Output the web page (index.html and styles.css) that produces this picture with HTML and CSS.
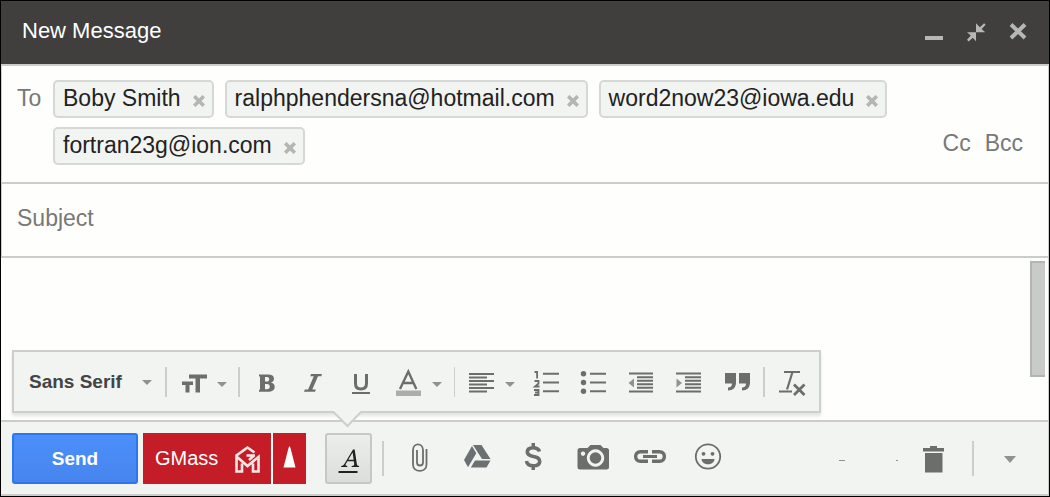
FILE: index.html
```html
<!DOCTYPE html>
<html lang="en">
<head>
<meta charset="utf-8">
<title>New Message</title>
<link rel="stylesheet" href="styles.css">
</head>
<body>
<main class="compose">
  <header class="titlebar">
    <h1 class="title">New Message</h1>
    <div class="window-controls">
      <button type="button" class="window-button" aria-label="Minimize"><svg width="42" height="42" viewBox="913 10 42 42"><rect x="925" y="36" width="18" height="4"/></svg></button>
      <button type="button" class="window-button" aria-label="Exit full screen"><svg width="42" height="42" viewBox="955 10 42 42"><path d="M976 23.2v9h9.2l-3.6-3.2 4-4.2-1.5-1.6-4.2 4zM976 32.2v9l-3.2-3.5-4.2 3.7-1.6-1.6 3.8-4.2-3.8-3.4z"/></svg></button>
      <button type="button" class="window-button" aria-label="Close"><svg width="42" height="42" viewBox="997 10 42 42"><path class="stroke" stroke-width="4" d="M1011 24.500l14 13.500M1025 24.500l-14 13.500"/></svg></button>
    </div>
  </header>

  <section class="recipients">
    <span class="to-label">To</span>
    <ul class="chips">
      <li class="chip">Boby Smith<button type="button" class="chip-remove" aria-label="Remove Boby Smith"><svg width="12" height="12" viewBox="0 0 12 12"><path class="stroke" stroke-width="3.6" d="M1.2 1.2l9.600 9.600M10.800 1.200l-9.600 9.600"/></svg></button></li>
      <li class="chip">ralphphendersna@hotmail.com<button type="button" class="chip-remove" aria-label="Remove ralphphendersna@hotmail.com"><svg width="12" height="12" viewBox="0 0 12 12"><path class="stroke" stroke-width="3.6" d="M1.2 1.2l9.600 9.600M10.800 1.200l-9.600 9.600"/></svg></button></li>
      <li class="chip">word2now23@iowa.edu<button type="button" class="chip-remove" aria-label="Remove word2now23@iowa.edu"><svg width="12" height="12" viewBox="0 0 12 12"><path class="stroke" stroke-width="3.6" d="M1.2 1.2l9.600 9.600M10.800 1.200l-9.600 9.600"/></svg></button></li>
      <li class="chip">fortran23g@ion.com<button type="button" class="chip-remove" aria-label="Remove fortran23g@ion.com"><svg width="12" height="12" viewBox="0 0 12 12"><path class="stroke" stroke-width="3.6" d="M1.2 1.2l9.600 9.600M10.800 1.200l-9.600 9.600"/></svg></button></li>
    </ul>
    <div class="copy-links"><a href="#cc">Cc</a><a href="#bcc">Bcc</a></div>
  </section>

  <div class="subject-row"><input class="subject" type="text" placeholder="Subject" aria-label="Subject"></div>

  <div class="message">
    <textarea class="message-text" aria-label="Message body"></textarea>
    <div class="scroll-thumb"></div>
  </div>

  <footer class="actions">
    <div class="format-bar" role="toolbar" aria-label="Formatting options">
      <label class="font-picker">
        <select class="font-select" aria-label="Font"><option>Sans Serif</option></select>
        <svg class="font-caret" width="10" height="5" viewBox="0 0 10 5"><path class="light" d="M0 0h10L5 5z"/></svg>
      </label>
      <span class="rule"></span>
      <button type="button" class="tool" aria-label="Size"><svg width="71" height="59" viewBox="167 352 71 59"><path d="M189 374.500h18v4h-7v14h-4.500v-14H189zM182 381.500h11v3.500h-3.500v7.500H185.500V385H182z"/><path class="light" d="M217 382h10l-5 5z"/></svg></button>
      <span class="rule"></span>
      <button type="button" class="tool" aria-label="Bold"><svg width="50" height="59" viewBox="240 352 50 59"><path fill-rule="evenodd" d="M259 374.500h9c4 0 6 1.500 6 4.200 0 2-1.200 3.300-3.200 3.800 2.500.5 3.900 2 3.900 4.300 0 3.500-2.500 5-6.700 5h-9v-2h1v-13.300h-1zM265 377v4.500h1.800c1.700 0 2.400-.7 2.400-2.300 0-1.500-.7-2.200-2.400-2.200zM265 384v5.300h2c1.900 0 2.700-.9 2.700-2.700s-.8-2.600-2.700-2.600z"/></svg></button>
      <button type="button" class="tool" aria-label="Italic"><svg width="47" height="59" viewBox="290 352 47 59"><path d="M311 374h11l-.7 2.200h-3.300l-5.700 13.200h3.500l-.8 2.300H304l.8-2.300h3.300l5.700-13.200h-3.500z"/></svg></button>
      <button type="button" class="tool" aria-label="Underline"><svg width="47" height="59" viewBox="337 352 47 59"><path class="stroke" stroke-width="3" d="M355.500 374v9.500c0 4 1.700 5.500 5.300 5.500s5.700-1.500 5.700-5.500V374"/><rect x="352" y="392" width="18" height="2"/></svg></button>
      <button type="button" class="tool" aria-label="Text color"><svg width="70" height="59" viewBox="384 352 70 59"><path class="stroke" stroke-width="2.400" d="M400 389l8.300-17.500 8 17.500M403 383h10.500"/><rect class="pale" x="396" y="390.500" width="25" height="5.500"/><path class="light" d="M432 382h10l-5 5z"/></svg></button>
      <span class="rule thin"></span>
      <button type="button" class="tool" aria-label="Align"><svg width="67" height="59" viewBox="456 352 67 59"><path d="M469 373h25v2h-25zM469 376.500h18v2h-18zM469 380h25v2h-25zM469 383.500h18v2h-18zM469 387h25v2h-25zM469 390.500h18v2h-18z"/><path class="light" d="M505 382h10l-5 5z"/></svg></button>
      <button type="button" class="tool" aria-label="Numbered list"><svg width="47" height="59" viewBox="523 352 47 59"><path d="M543 372.700h16v2h-16zM543 381.500h16v2h-16zM543 390.300h16v2h-16z"/><path class="stroke" stroke-width="1.800" d="M534.500 372h2.600v6.500M534.500 381h4v2.500l-3.500 3h4.500M534 390h4.500v5h-4.500M535 392.500h3.500"/></svg></button>
      <button type="button" class="tool" aria-label="Bulleted list"><svg width="47" height="59" viewBox="570 352 47 59"><circle cx="583.500" cy="373.700" r="2.700"/><circle cx="583.500" cy="382.500" r="2.700"/><circle cx="583.500" cy="391.300" r="2.700"/><path d="M590 372.700h16v2h-16zM590 381.500h16v2h-16zM590 390.300h16v2h-16z"/></svg></button>
      <button type="button" class="tool" aria-label="Indent less"><svg width="47" height="59" viewBox="617 352 47 59"><path d="M629 372.500h24v2h-24zM637 376.300h16v2h-16zM637 379.700h16v2h-16zM637 383.300h16v2h-16zM637 386.700h16v2h-16zM629 390.500h24v2h-24z"/><path class="light" d="M634 378.500v9l-5.500-4.500z"/></svg></button>
      <button type="button" class="tool" aria-label="Indent more"><svg width="47" height="59" viewBox="664 352 47 59"><path d="M676 372.500h25v2h-25zM685 376.300h16v2h-16zM685 379.700h16v2h-16zM685 383.300h16v2h-16zM685 386.700h16v2h-16zM676 390.500h25v2h-25z"/><path class="light" d="M676.500 378.500v9l5.500-4.500z"/></svg></button>
      <button type="button" class="tool" aria-label="Quote"><svg width="52" height="59" viewBox="711 352 52 59"><path d="M725 373h11v9.500c0 5-3 8-8 8v-3c2.700 0 4-1.200 4-4H725zM739 373h11v9.500c0 5-3 8-8 8v-3c2.700 0 4-1.200 4-4H739z"/></svg></button>
      <span class="rule"></span>
      <button type="button" class="tool" aria-label="Remove formatting"><svg width="54" height="59" viewBox="765 352 54 59"><path class="stroke" stroke-width="2" d="M784 372h16M779 391.500h13"/><path class="stroke" stroke-width="2.200" d="M792.500 372l-5.500 17.500"/><path class="stroke" stroke-width="2.800" d="M794 384.500l10.500 10.500M804.500 384.500l-10.500 10.500"/></svg></button>
      <svg class="pointer" width="32" height="17" viewBox="0 0 32 17"><path class="pointer-fill" d="M0 0h32v2h-2L16.500 15 3 2H0z"/><path class="pointer-edge" d="M0 1h2.500L16.500 15 30 1h2"/></svg>
    </div>

    <button type="button" class="send">Send</button>
    <div class="gmass-group">
      <button type="button" class="gmass">GMass<svg width="28" height="32" viewBox="0 0 28 32"><path class="mark" d="M20.500 9.500L13.500 4.500 2.500 12.500V28.500H8V20.500M2.500 13.500l11 9.500L24.500 14V28.500H19V20.500M21 12.500h-8.500M20 12.500l-5 4.500"/></svg></button>
      <button type="button" class="gmass-settings" aria-label="GMass settings"><svg width="33" height="51" viewBox="273 433 33 51"><path class="white" d="M289.500 446l1 2 5 19.500h-12l5-19.500z"/></svg></button>
    </div>
    <button type="button" class="format-toggle" aria-label="Formatting options" aria-pressed="true"><svg width="43" height="47" viewBox="327 435 43 47"><path class="ink" fill-rule="evenodd" d="M341 467l.3-1c1.500-.2 2.300-.8 3.500-2.700l8.200-13.800h1.700l2.100 14.200c.2 1.600.8 2.100 2.400 2.300l-.3 1h-7.400l.3-1c2-.2 2.500-.7 2.400-2l-.4-2.800h-6.400l-1.300 2.300c-1 1.700-.6 2.300 1.300 2.500l-.3 1zM348.300 459.800h5.300l-1-7.300zM338.500 471h19v2h-19z"/></svg></button>
    <span class="rule tall"></span>
    <div class="insert-tools">
      <button type="button" class="tool" aria-label="Attach files"><svg width="60" height="51" viewBox="390 433 60 51"><path class="stroke" stroke-width="1.800" d="M417 450v12.500c0 4 6 4 6 0V450c0-7.500-10-7.500-10 0v14.500c0 8.500 13.500 8.500 13.500 0V449"/></svg></button>
      <button type="button" class="tool" aria-label="Insert from Drive"><svg width="54" height="51" viewBox="450 433 54 51"><path class="drive" d="M473 445h8.500l9 14H482zM472 446l4.300 7.200-8.300 14L464 460zM475 460.500h15.500l-4 7H470.800z"/></svg></button>
      <button type="button" class="tool" aria-label="Send money"><svg width="58" height="51" viewBox="504 433 58 51"><path class="stroke" stroke-width="3.600" d="M539.500 451.500c-1-3-3.500-3.800-6.500-3.800-3.500 0-5.700 1.600-5.700 4.300 0 6.500 12.400 2.500 12.400 9.200 0 3-2.700 4.600-6.400 4.600-3.800 0-6.300-1.600-6.800-4.800"/><path d="M531.500 443h3.500v4h-3.500zM531.500 466h3.500v4h-3.500z"/></svg></button>
      <button type="button" class="tool" aria-label="Insert photo"><svg width="60" height="51" viewBox="562 433 60 51"><path fill-rule="evenodd" d="M580 448h7.500l3-3h10l3 3h3q2.500 0 2.500 2.500v16.500q0 2.500-2.500 2.500H580q-2.500 0-2.500-2.500v-16.500Q577.500 448 580 448zM595.500 449.300a8.700 8.700 0 1 0 .01 0zM583 451.500a2.200 2.200 0 1 0 .01 0z"/><circle cx="595.500" cy="458" r="5.800"/></svg></button>
      <button type="button" class="tool" aria-label="Insert link"><svg width="56" height="51" viewBox="622 433 56 51"><path class="stroke" stroke-width="3.400" d="M648 451.700h-7.500c-6.500 0-6.500 9.600 0 9.600h7.500M652 451.700h7.500c6.500 0 6.500 9.600 0 9.600H652"/><rect x="643" y="455" width="14" height="3"/></svg></button>
      <button type="button" class="tool" aria-label="Insert emoji"><svg width="60" height="51" viewBox="678 433 60 51"><circle class="stroke" stroke-width="1.800" cx="708" cy="456.500" r="12.200"/><circle cx="703.500" cy="453.800" r="1.900"/><circle cx="712.500" cy="453.800" r="1.900"/><path d="M701.500 459h13c-.5 7-12.500 7-13 0z"/></svg></button>
    </div>
    <div class="actions-end">
      <svg width="62" height="51" viewBox="838 433 62 51" aria-hidden="true"><path class="light" d="M839 460h6v1h-6zM896 460h2v1h-2z"/></svg>
      <button type="button" class="tool" aria-label="Discard draft"><svg width="72" height="51" viewBox="900 433 72 51"><path d="M923 448h7v-2h7v2h7v3.500h-21zM925 453h17.500v19.500H925z"/></svg></button>
      <span class="rule tall"></span>
      <button type="button" class="tool" aria-label="More options"><svg width="73" height="51" viewBox="974 433 73 51"><path class="light" d="M1004 456h12l-6 7z"/></svg></button>
    </div>
  </footer>
</main>
</body>
</html>
```

FILE: styles.css
```css
* {
  box-sizing: border-box;
}

body {
  margin: 0;
  font-family: "Liberation Sans", Arial, sans-serif;
  background: #fefefc;
}

button,
select,
input,
textarea {
  margin: 0;
  padding: 0;
  border: 0;
  background: none;
  font-family: inherit;
  color: inherit;
}

svg {
  display: block;
  flex: none;
  fill: currentColor;
}

.compose {
  display: flex;
  flex-direction: column;
  min-height: 100vh;
  border: 1px solid #000;
}

.titlebar {
  display: flex;
  align-items: center;
  justify-content: space-between;
  height: 65px;
  padding: 0 10px 3px 21px;
  background: #403f3e;
  border-bottom: 2px solid #cccdcb;
}

.title {
  margin: 0;
  font-size: 22px;
  font-weight: 400;
  line-height: 28px;
  color: #fff;
}

.window-controls {
  display: flex;
  color: #b6b8b5;
}

.stroke {
  fill: none;
  stroke: currentColor;
}

.recipients,
.subject-row {
  border: 1px solid #cccdcb;
  border-width: 0 1px 2px;
}

.recipients {
  display: flex;
  padding: 14px 25px 17px 15px;
  font-size: 23px;
  line-height: 32px;
  color: #777976;
}

.to-label {
  width: 36px;
  padding-top: 2px;
}

.chips {
  display: flex;
  flex: 1;
  flex-wrap: wrap;
  gap: 9px 11px;
  margin: 0;
  padding: 0;
  list-style: none;
}

.chip {
  display: flex;
  align-items: center;
  gap: 12px;
  padding: 0 7px 2px 8px;
  border: 2px solid #d5d8d4;
  border-radius: 5px;
  background: #f2f4f1;
  color: #222;
}

.chip-remove {
  padding-top: 5px;
  color: #b3b6b2;
}

.copy-links {
  display: flex;
  align-self: flex-end;
  gap: 14px;
  padding-bottom: 6px;
}

.copy-links a {
  color: inherit;
  text-decoration: none;
}

.subject {
  display: block;
  width: 100%;
  height: 72px;
  padding: 0 15px 4px;
  font-size: 23px;
  outline: none;
}

.subject::placeholder {
  color: #777976;
  opacity: 1;
}

.message {
  display: flex;
  flex: 1;
  padding: 3px 3px 0 15px;
  border-right: 1px solid #cccdcb;
}

.message-text {
  flex: 1;
  resize: none;
  font-size: 23px;
  outline: none;
}

.scroll-thumb {
  width: 15px;
  height: 116px;
  border: 2px solid #b3b5b2;
  border-right-width: 0;
  background: #c9cbc8;
}

.actions {
  position: relative;
  display: flex;
  align-items: center;
  padding: 11px 1px 10px 11px;
  border: 2px solid #cccdcb;
  border-width: 2px 1px 2px 0;
  background: #f2f4f1;
  color: #6b6e6a;
}

.rule {
  flex: none;
  width: 2px;
  height: 30px;
  background: #cccecb;
}

.thin {
  width: 1px;
  margin-right: 1px;
}

.tall {
  height: 35px;
}

.light {
  fill: #8f928e;
}

.pale {
  fill: #aaadaa;
}

.format-bar {
  position: absolute;
  left: 11px;
  bottom: calc(100% + 9px);
  display: flex;
  align-items: center;
  border: 2px solid #cccfcb;
  background: #f2f4f1;
  box-shadow: 0 3px 3px #e3e5e2;
}

.font-picker {
  position: relative;
  display: block;
}

.font-select {
  display: block;
  width: 151px;
  height: 59px;
  padding: 0 0 0 15px;
  appearance: none;
  font-size: 19px;
  font-weight: 700;
  color: #444;
}

.font-caret {
  position: absolute;
  right: 13px;
  top: 28px;
  pointer-events: none;
}

.pointer {
  position: absolute;
  left: 317px;
  top: 59px;
}

.pointer-fill {
  fill: #f2f4f1;
}

.pointer-edge {
  fill: none;
  stroke: #cccfcb;
  stroke-width: 2;
}

.send {
  width: 126px;
  height: 51px;
  border: 2px solid #2d77ee;
  border-radius: 3px;
  background: linear-gradient(#4b8ffb, #4785ee);
  font-size: 19px;
  font-weight: 700;
  color: #fff;
}

.gmass-group {
  display: flex;
  gap: 2px;
  margin: 0 19px 0 5px;
  background: #fff;
}

.gmass {
  display: flex;
  align-items: center;
  justify-content: space-between;
  width: 128px;
  height: 51px;
  padding: 0 9px 0 12px;
  background: #c51d28;
  font-size: 20px;
  color: #fff;
}

.gmass-settings {
  background: #c51d28;
}

.mark {
  fill: none;
  stroke: #fbe6e6;
  stroke-width: 2.6;
}

.white {
  fill: #fff;
}

.format-toggle {
  margin-right: 10px;
  border: 2px solid #c6c8c5;
  border-radius: 3px;
  background: linear-gradient(#eceeeb, #dcdedb);
}

.ink {
  fill: #222;
}

.insert-tools {
  display: flex;
  margin-left: 6px;
}

.drive {
  fill: #6b7173;
}

.actions-end {
  display: flex;
  align-items: center;
  margin-left: auto;
}
```
